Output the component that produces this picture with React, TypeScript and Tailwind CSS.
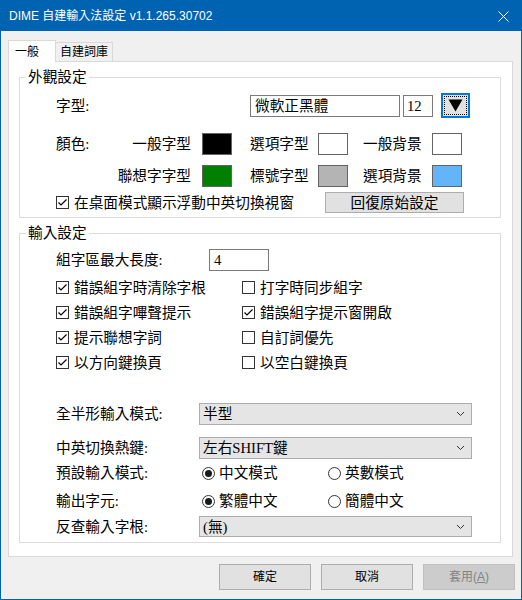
import React from "react";

const ming = "font-['Liberation_Serif','Noto_Sans_CJK_TC',serif] text-[14.67px] leading-[18px] text-black whitespace-nowrap";
const ui = "font-['Liberation_Sans','Noto_Sans_CJK_TC',sans-serif] text-[12px] leading-[16px]";

function CheckBox({ checked }: { checked: boolean }) {
  return (
    <span className="w-[13px] h-[13px] border border-[#333333] bg-white flex items-center justify-center shrink-0">
      {checked && (
        <svg width="11" height="11" viewBox="0 0 11 11">
          <polyline points="1.5,5.5 4,8 9.5,2.5" fill="none" stroke="#000" strokeWidth="1.2" />
        </svg>
      )}
    </span>
  );
}

function Check({ label, checked }: { label: string; checked: boolean }) {
  return (
    <div className="flex items-center">
      <CheckBox checked={checked} />
      <span className={`${ming} ml-[5px]`}>{label}</span>
    </div>
  );
}

function Radio({ label, checked }: { label: string; checked: boolean }) {
  return (
    <div className="flex items-center">
      <span className="w-[13px] h-[13px] rounded-full border border-[#333333] bg-white flex items-center justify-center shrink-0">
        {checked && <span className="w-[7px] h-[7px] rounded-full bg-[#1a1a1a]" />}
      </span>
      <span className={`${ming} ml-[4px]`}>{label}</span>
    </div>
  );
}

function Combo({ value, h }: { value: string; h: string }) {
  return (
    <div className={`w-[273px] ${h} bg-[#e5e5e5] border border-[#adadad] flex items-center pl-[3px] pr-[6px]`}>
      <span className={`${ming} flex-1`}>{value}</span>
      <svg width="9" height="6" viewBox="0 0 9 6">
        <polyline points="1,1 4.5,4.5 8,1" fill="none" stroke="#333" strokeWidth="1" />
      </svg>
    </div>
  );
}

function Swatch({ color, ml }: { color: string; ml: string }) {
  return <div className={`w-[30px] h-[22px] border border-[#646464] shrink-0 ${ml}`} style={{ background: color }} />;
}

function Group({ title, children, className }: { title: string; children: React.ReactNode; className: string }) {
  return (
    <div className={`relative ml-[10px] w-[482px] border border-[#dcdcdc] ${className}`}>
      <span className={`${ming} absolute -top-[10px] left-[6px] bg-white px-[2px]`}>{title}</span>
      {children}
    </div>
  );
}

function Button({ label, disabled }: { label: React.ReactNode; disabled?: boolean }) {
  return (
    <div
      className={`${ui} w-[92px] h-[26px] flex items-center justify-center border ${
        disabled ? "bg-[#cccccc] border-[#bfbfbf] text-[#838383]" : "bg-[#e1e1e1] border-[#adadad] text-black"
      }`}
    >
      {label}
    </div>
  );
}

export default function App() {
  return (
    <div className="w-[522px] h-[600px] border border-[#0063b1] bg-[#f0f0f0] flex flex-col">
      {/* title bar */}
      <div className="h-[30px] bg-[#0063b1] flex items-center pl-[8px] pr-[12px] shrink-0">
        <span className={`${ui} text-[12.5px] text-white flex-1`}>DIME 自建輸入法設定 v1.1.265.30702</span>
        <svg width="11" height="11" viewBox="0 0 11 11">
          <path d="M0.5 0.5 L10.5 10.5 M10.5 0.5 L0.5 10.5" stroke="#fff" strokeWidth="1" />
        </svg>
      </div>

      <div className="flex flex-col pl-[7px] pt-[9px]">
        {/* tabs */}
        <div className="flex items-end h-[21px]">
          <div className={`${ui} relative z-10 w-[48px] h-[22px] -mb-[1px] bg-white border-t border-x border-[#d9d9d9] flex items-center pl-[6px]`}>
            一般
          </div>
          <div className={`${ui} w-[57px] h-[19px] border-t border-r border-[#d9d9d9] flex items-center pl-[4px]`}>
            自建詞庫
          </div>
        </div>

        {/* panel */}
        <div className="w-[505px] h-[496px] bg-white border border-[#d9d9d9] flex flex-col">
          <Group title="外觀設定" className="mt-[15px] h-[141px] pl-[36px]">
            <div className="flex items-center h-[25px] mt-[15px]">
              <span className={`${ming} w-[194px]`}>字型:</span>
              <div className={`${ming} w-[150px] h-[22px] border border-[#7a7a7a] flex items-center pl-[4px]`}>微軟正黑體</div>
              <div className={`${ming} w-[30px] h-[22px] ml-[3px] border border-[#7a7a7a] flex items-center pl-[3px]`}>12</div>
              <div className="w-[29px] h-[25px] ml-[8px] border-2 border-[#0078d7] bg-[#e1e1e1] p-[1px]">
                <div className="w-full h-full border border-dotted border-black flex items-center justify-center">
                  <svg width="15" height="13" viewBox="0 0 15 13">
                    <polygon points="0.5,0.5 14.5,0.5 7.5,12.5" fill="#000" />
                  </svg>
                </div>
              </div>
            </div>

            <div className="flex items-center h-[22px] mt-[15px]">
              <span className={`${ming} w-[60px]`}>顏色:</span>
              <span className={`${ming} w-[75px] text-right`}>一般字型</span>
              <Swatch color="#000000" ml="ml-[11px]" />
              <span className={`${ming} w-[60px] ml-[18px]`}>選項字型</span>
              <Swatch color="#ffffff" ml="ml-[8px]" />
              <span className={`${ming} w-[60px] ml-[15px]`}>一般背景</span>
              <Swatch color="#ffffff" ml="ml-[9px]" />
            </div>

            <div className="flex items-center h-[22px] mt-[10px]">
              <span className="w-[60px]" />
              <span className={`${ming} w-[75px] text-right`}>聯想字字型</span>
              <Swatch color="#008000" ml="ml-[11px]" />
              <span className={`${ming} w-[60px] ml-[18px]`}>標號字型</span>
              <Swatch color="#b4b4b4" ml="ml-[8px]" />
              <span className={`${ming} w-[60px] ml-[15px]`}>選項背景</span>
              <Swatch color="#64b4f8" ml="ml-[9px]" />
            </div>

            <div className="flex items-center h-[21px] mt-[5px]">
              <div className="w-[269px]">
                <Check label="在桌面模式顯示浮動中英切換視窗" checked />
              </div>
              <div className={`${ming} w-[139px] h-[21px] bg-[#e1e1e1] border border-[#adadad] flex items-center justify-center`}>
                回復原始設定
              </div>
            </div>
          </Group>

          <Group title="輸入設定" className="mt-[15px] h-[310px] pl-[36px]">
            <div className="flex items-center h-[22px] mt-[15px]">
              <span className={`${ming} w-[153px]`}>組字區最大長度:</span>
              <div className={`${ming} w-[60px] h-[22px] border border-[#7a7a7a] flex items-center pl-[4px]`}>4</div>
            </div>

            <div className="mt-[4px] flex flex-col">
              {[
                ["錯誤組字時清除字根", true, "打字時同步組字", false],
                ["錯誤組字嗶聲提示", true, "錯誤組字提示窗開啟", true],
                ["提示聯想字詞", true, "自訂詞優先", false],
                ["以方向鍵換頁", true, "以空白鍵換頁", false],
              ].map(([a, ac, b, bc], i) => (
                <div key={i} className="flex items-center h-[25px]">
                  <div className="w-[186px]">
                    <Check label={a as string} checked={ac as boolean} />
                  </div>
                  <Check label={b as string} checked={bc as boolean} />
                </div>
              ))}
            </div>

            <div className="flex items-center h-[22px] mt-[28px]">
              <span className={`${ming} w-[143px]`}>全半形輸入模式:</span>
              <Combo value="半型" h="h-[22px]" />
            </div>
            <div className="flex items-center h-[22px] mt-[12px]">
              <span className={`${ming} w-[143px]`}>中英切換熱鍵:</span>
              <Combo value="左右SHIFT鍵" h="h-[22px]" />
            </div>
            <div className="flex items-center h-[22px] mt-[3px]">
              <span className={`${ming} w-[146px]`}>預設輸入模式:</span>
              <div className="w-[126px]">
                <Radio label="中文模式" checked />
              </div>
              <Radio label="英數模式" checked={false} />
            </div>
            <div className="flex items-center h-[22px] mt-[6px]">
              <span className={`${ming} w-[146px]`}>輸出字元:</span>
              <div className="w-[126px]">
                <Radio label="繁體中文" checked />
              </div>
              <Radio label="簡體中文" checked={false} />
            </div>
            <div className="flex items-center h-[21px] mt-[4px]">
              <span className={`${ming} w-[143px]`}>反查輸入字根:</span>
              <Combo value="(無)" h="h-[21px]" />
            </div>
          </Group>
        </div>

        {/* buttons */}
        <div className="flex justify-end gap-[10px] mt-[7px] pr-[6px]">
          <Button label="確定" />
          <Button label="取消" />
          <Button
            disabled
            label={
              <span>
                套用(<span className="underline">A</span>)
              </span>
            }
          />
        </div>
      </div>
    </div>
  );
}
